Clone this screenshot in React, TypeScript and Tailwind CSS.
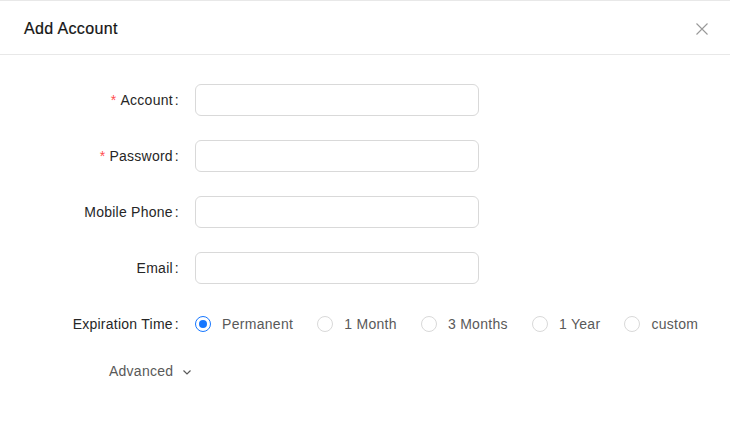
import { useState } from "react";

const periods = ["Permanent", "1 Month", "3 Months", "1 Year", "custom"];

function Field({ label, required }: { label: string; required?: boolean }) {
  return (
    <div className="flex items-center h-8 mb-6">
      <div className="w-[179px] text-right text-[14px] tracking-[0.25px] text-[#262626] leading-8">
        {required && <span className="text-[#ff4d4f] mr-1">*</span>}
        {label}
        <span className="ml-0.5">:</span>
      </div>
      <input
        className="ml-4 w-[284px] h-8 rounded-md border border-[#d9d9d9] bg-white px-3 text-[14px] outline-none"
      />
    </div>
  );
}

export default function App() {
  const [period, setPeriod] = useState("Permanent");

  return (
    <div
      className="w-[730px] h-[439px] bg-white"
      style={{ fontFamily: '"Liberation Sans", Arial, sans-serif' }}
    >
      {/* header */}
      <div className="h-[55px] border-t border-b border-[#e8e8e8] flex items-center justify-between pl-6 pr-[22px]">
        <h1 className="mt-0.5 text-[16px] tracking-[0.35px] text-[#141414] [-webkit-text-stroke:0.2px_#141414]">
          Add Account
        </h1>
        <button className="mt-0.5 w-3 h-3 text-[#999]">
          <svg viewBox="0 0 12 12" width="12" height="12" fill="none" stroke="currentColor" strokeWidth="1.1">
            <path d="M0.5 0.5L11.5 11.5M11.5 0.5L0.5 11.5" />
          </svg>
        </button>
      </div>

      {/* body */}
      <div className="pt-[29px]">
        <Field label="Account" required />
        <Field label="Password" required />
        <Field label="Mobile Phone" />
        <Field label="Email" />

        <div className="flex items-center h-8">
          <div className="w-[179px] text-right text-[14px] tracking-[0.25px] text-[#262626]">
            Expiration Time<span className="ml-0.5">:</span>
          </div>
          <div className="ml-4 flex items-center gap-6">
            {periods.map((p) => {
              const on = p === period;
              return (
                <label key={p} className="flex items-center cursor-pointer" onClick={() => setPeriod(p)}>
                  <span
                    className={`w-4 h-4 rounded-full border flex items-center justify-center ${
                      on ? "border-[#1677ff]" : "border-[#d9d9d9]"
                    }`}
                  >
                    {on && <span className="w-2 h-2 rounded-full bg-[#1677ff]" />}
                  </span>
                  <span className="ml-[11px] text-[14px] tracking-[0.3px] text-[#595959]">{p}</span>
                </label>
              );
            })}
          </div>
        </div>

        <button className="mt-[21px] ml-[109px] flex items-center gap-[9px] text-[14px] tracking-[0.25px] text-[#595959]">
          Advanced
          <svg viewBox="0 0 10 10" width="10" height="10" fill="none" stroke="currentColor" strokeWidth="1.2">
            <path d="M1.5 3.5L5 7L8.5 3.5" />
          </svg>
        </button>
      </div>
    </div>
  );
}
